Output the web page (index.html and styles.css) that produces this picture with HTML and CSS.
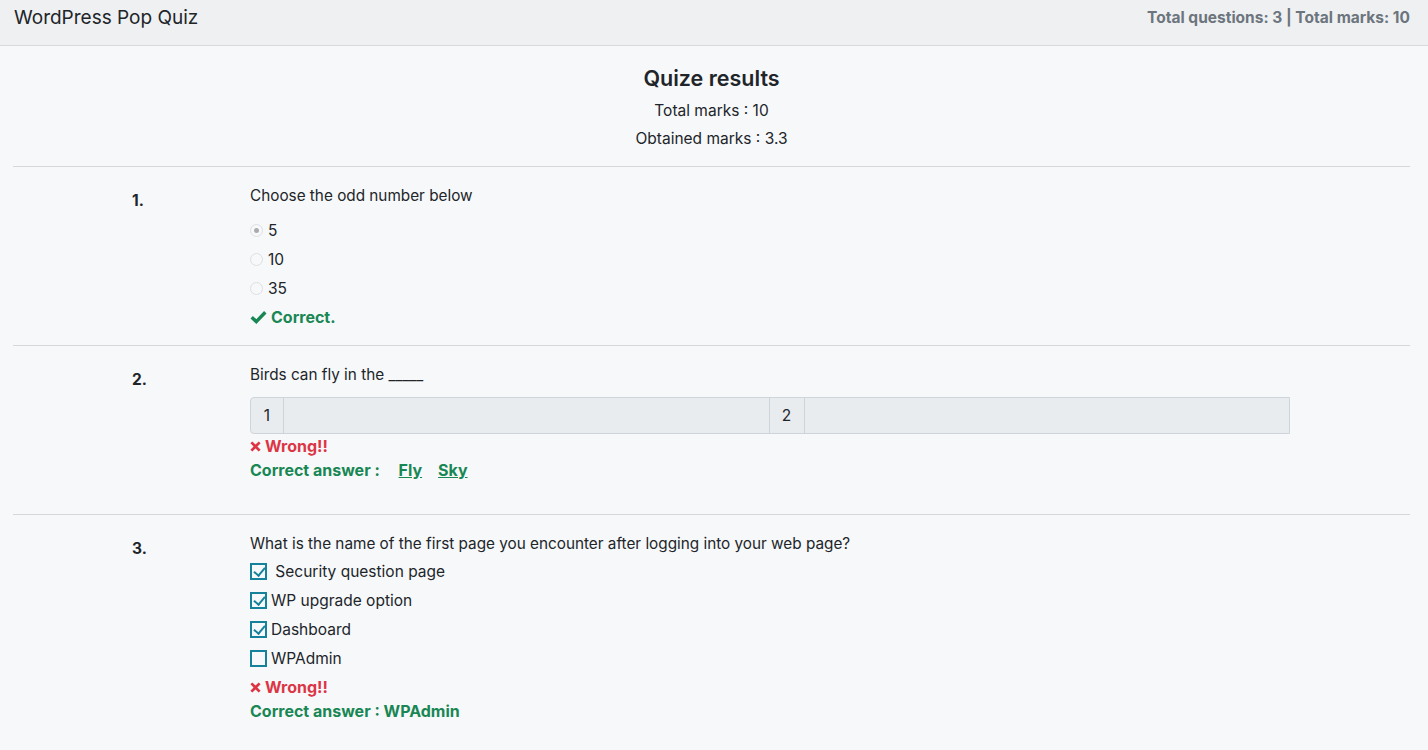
FILE: index.html
```html
<!DOCTYPE html>
<html lang="en">
<head>
<meta charset="utf-8">
<title>WordPress Pop Quiz</title>
<link rel="stylesheet" href="styles.css">
</head>
<body>
<header class="topbar">
  <div class="brand">WordPress Pop Quiz</div>
  <div class="totals">Total questions: 3 | Total marks: 10</div>
</header>
<main class="page">
  <section class="summary">
    <h4 class="summary-title">Quize results</h4>
    <p class="summary-line">Total marks : 10</p>
    <p class="summary-line">Obtained marks : 3.3</p>
  </section>
  <hr class="sep">

  <section class="question q1">
    <div class="qnum">1.</div>
    <div class="qbody">
      <p class="qtext">Choose the odd number below</p>
      <ul class="options radios">
        <li><span class="radio checked"></span>5</li>
        <li><span class="radio"></span>10</li>
        <li><span class="radio"></span>35</li>
      </ul>
      <div class="result ok">
        <svg class="ico-check" viewBox="0 0 16 14" width="17" height="14"><path d="M1.2 7.2 L5.8 11.6 L14.8 2.2" fill="none" stroke="currentColor" stroke-width="3.4" stroke-linecap="butt" stroke-linejoin="miter"/></svg>Correct.
      </div>
    </div>
  </section>
  <hr class="sep">

  <section class="question q2">
    <div class="qnum">2.</div>
    <div class="qbody">
      <p class="qtext">Birds can fly in the _____</p>
      <div class="input-group">
        <span class="ig-label first">1</span>
        <span class="ig-input"></span>
        <span class="ig-label">2</span>
        <span class="ig-input"></span>
      </div>
      <div class="result bad">
        <svg class="ico-x" viewBox="0 0 12 12" width="11" height="11"><path d="M1.5 1.5 L10.5 10.5 M10.5 1.5 L1.5 10.5" fill="none" stroke="currentColor" stroke-width="3"/></svg>Wrong!!
      </div>
      <div class="answer">Correct answer : <a class="ans-link" href="#">Fly</a><a class="ans-link" href="#">Sky</a></div>
    </div>
  </section>
  <hr class="sep">

  <section class="question q3">
    <div class="qnum">3.</div>
    <div class="qbody">
      <p class="qtext">What is the name of the first page you encounter after logging into your web page?</p>
      <ul class="options checks">
        <li><span class="checkbox checked"></span>&nbsp;Security question page</li>
        <li><span class="checkbox checked"></span>WP upgrade option</li>
        <li><span class="checkbox checked"></span>Dashboard</li>
        <li><span class="checkbox"></span>WPAdmin</li>
      </ul>
      <div class="result bad">
        <svg class="ico-x" viewBox="0 0 12 12" width="11" height="11"><path d="M1.5 1.5 L10.5 10.5 M10.5 1.5 L1.5 10.5" fill="none" stroke="currentColor" stroke-width="3"/></svg>Wrong!!
      </div>
      <div class="answer">Correct answer : WPAdmin</div>
    </div>
  </section>
</main>
</body>
</html>
```
FILE: styles.css
```css
* { box-sizing: border-box; }
html, body { margin: 0; padding: 0; }
body {
  font-family: Inter, "Liberation Sans", Arial, sans-serif;
  font-size: 16px;
  line-height: 1.5;
  color: #212529;
  background: #f7f8fa;
}
.topbar {
  height: 46px;
  background: #eff0f2;
  border-bottom: 1px solid #d9dadc;
  display: flex;
  align-items: center;
  justify-content: space-between;
  padding: 0 18px 9px 14px;
}
.brand { font-size: 19px; color: #212529; }
.totals { font-size: 15.5px; font-weight: 700; color: #6c757d; }

.page { padding: 0 18px 20px 13px; }
.summary { text-align: center; padding-top: 16px; }
.summary-title { margin: 0 0 3px 0; font-size: 21.5px; font-weight: 600; line-height: 32px; }
.summary-line { margin: 0; line-height: 28px; font-size: 15.5px; }
.sep { border: 0; border-top: 1px solid #d6d7d9; margin: 13px 0 0 0; height: 0; }

.question { display: grid; grid-template-columns: 237px 1040px; padding-top: 17px; }
.qnum { padding-left: 119px; font-weight: 700; font-size: 15.5px; padding-top: 5px; }
.qtext { margin: 0; font-size: 15.3px; line-height: 24px; }
.options { list-style: none; margin: 0; padding: 0; }
.options li { display: flex; align-items: center; height: 29px; font-size: 15.5px; }
.radios { margin-top: 8px; }
.radio {
  width: 13px; height: 13px; border-radius: 50%;
  border: 1px solid #dedfe1; background: #f7f8fa;
  margin-right: 5px; position: relative;
}
.radio.checked::after {
  content: ""; position: absolute; left: 3px; top: 3px;
  width: 5px; height: 5px; border-radius: 50%; background: #a9abae;
}
.checks { margin-top: 1px; }
.checkbox {
  width: 17px; height: 17px; border: 2px solid #16819a;
  margin-right: 4px; position: relative; background: #f7f8fa;
}
.checkbox.checked::after {
  content: ""; position: absolute; left: 4px; top: 0px;
  width: 5px; height: 9px;
  border-right: 2px solid #16819a; border-bottom: 2px solid #16819a;
  transform: rotate(40deg);
}
.result { font-weight: 700; font-size: 16px; display: flex; align-items: center; }
.result.ok { color: #198754; height: 29px; margin-top: -1px; }
.result.bad { color: #dc3545; height: 24px; }
.checks + .result.bad { margin-top: 2px; }
.ico-check { margin-right: 4px; }
.ico-x { margin-right: 4px; }
.answer { color: #198754; font-weight: 700; font-size: 16px; line-height: 24px; }
.ans-link { color: #198754; text-decoration: underline; margin-left: 15px; }
.ans-link + .ans-link { margin-left: 16px; }

.q1 .qbody { padding-bottom: 1px; }
.q2 .qbody { padding-bottom: 19px; }
.input-group {
  display: flex; height: 37px; margin-top: 10px; margin-bottom: 0;
  border: 1px solid #ced4da; border-radius: 4px 0 0 4px; background: #e9ecef;
}
.ig-label { width: 33px; display: flex; align-items: center; justify-content: center; font-size: 15.5px; border-right: 1px solid #ced4da; }
.ig-input { flex: 1; border-right: 1px solid #ced4da; }
.ig-input:last-child { border-right: 0; }
.ig-label:not(.first) { width: 35px; }
```
